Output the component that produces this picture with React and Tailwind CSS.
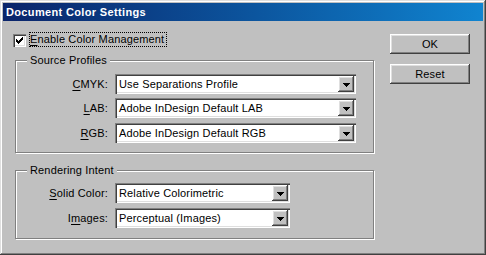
import React from "react";

const raisedBtn =
  "shadow-[inset_-1px_-1px_0_#404040,inset_1px_1px_0_#ffffff,inset_-2px_-2px_0_#808080,inset_2px_2px_0_#dfdfdf]";
const sunken =
  "shadow-[inset_1px_1px_0_#808080,inset_2px_2px_0_#404040,inset_-1px_-1px_0_#ffffff,inset_-2px_-2px_0_#dfdfdf]";

function Arrow() {
  return (
    <svg width="7" height="4" viewBox="0 0 7 4" shapeRendering="crispEdges">
      <path d="M0 0h7v1h-1v1h-1v1h-1v1h-1v-1h-1v-1h-1v-1h-1z" fill="#000" />
    </svg>
  );
}

function Select({ value, width }) {
  return (
    <div className={`flex h-[20px] bg-white p-[2px] ${sunken} ${width}`}>
      <div className="flex-1 pl-[2px] leading-[16px] whitespace-nowrap overflow-hidden">
        {value}
      </div>
      <div
        className={`flex h-[16px] w-[16px] items-center justify-center bg-[#c0c0c0] pt-[1px] ${raisedBtn}`}
      >
        <Arrow />
      </div>
    </div>
  );
}

function Row({ label, u, rest, value, width, className = "" }) {
  return (
    <div className={`flex h-[20px] items-center ${className}`}>
      <div className="w-[92px] text-right whitespace-nowrap">
        {label}
        <u className="underline-offset-[2px]">{u}</u>
        {rest}
      </div>
      <div className="ml-[7px]">
        <Select value={value} width={width} />
      </div>
    </div>
  );
}

function Group({ title, height, className = "", children }) {
  return (
    <div
      className={`ml-[2px] flex w-[359px] flex-col border border-[#808080] shadow-[1px_1px_0_#ffffff,inset_1px_1px_0_#ffffff] ${height} ${className}`}
    >
      <div className="-mt-[7px] ml-[11px] h-[13px] self-start bg-[#c0c0c0] px-[3px] leading-[13px]">
        {title}
      </div>
      {children}
    </div>
  );
}

function Check() {
  return (
    <div className={`h-[13px] w-[13px] bg-white p-[3px] ${sunken}`}>
      <svg width="7" height="7" viewBox="0 0 7 7" shapeRendering="crispEdges">
        <path
          d="M0 2h1v3h-1zM1 3h1v3h-1zM2 4h1v3h-1zM3 3h1v3h-1zM4 2h1v3h-1zM5 1h1v3h-1zM6 0h1v3h-1z"
          fill="#000"
        />
      </svg>
    </div>
  );
}

export default function App() {
  return (
    <div className="h-[255px] w-[486px] bg-[#c0c0c0] p-[3px] font-['Liberation_Sans',Arial,sans-serif] text-[11px] tracking-[0.15px] text-black shadow-[inset_-1px_-1px_0_#404040,inset_1px_1px_0_#dfdfdf,inset_-2px_-2px_0_#808080,inset_2px_2px_0_#ffffff]">
      <div className="flex h-[18px] items-center bg-gradient-to-r from-[#0a246a] to-[#1084d0] pl-[3px] text-[11px] font-bold tracking-[0.35px] text-white">
        Document Color Settings
      </div>
      <div className="flex pl-[10px] pt-[13px]">
        <div className="w-[362px]">
          <div className="flex h-[13px] items-start">
            <Check />
            <div className="-mt-[2px] ml-[3px] h-[15px] border border-dotted border-black pr-[2px] leading-[13px] whitespace-nowrap">
              <u className="underline-offset-[2px]">E</u>nable Color Management
            </div>
          </div>
          <Group title="Source Profiles" height="h-[93px]" className="mt-[13px]">
            <div className="mt-[7px]">
              <Row u="C" rest="MYK:" value="Use Separations Profile" width="w-[241px]" />
              <Row u="L" rest="AB:" value="Adobe InDesign Default LAB" width="w-[241px]" className="mt-[4px]" />
              <Row u="R" rest="GB:" value="Adobe InDesign Default RGB" width="w-[241px]" className="mt-[5px]" />
            </div>
          </Group>
          <Group title="Rendering Intent" height="h-[69px]" className="mt-[17px]">
            <div className="mt-[6px]">
              <Row u="S" rest="olid Color:" value="Relative Colorimetric" width="w-[175px]" />
              <Row label="I" u="m" rest="ages:" value="Perceptual (Images)" width="w-[175px]" className="mt-[5px]" />
            </div>
          </Group>
        </div>
        <div className="ml-[15px] flex flex-col gap-[10px]">
          <div className={`flex h-[20px] w-[80px] items-center justify-center ${raisedBtn}`}>OK</div>
          <div className={`flex h-[20px] w-[80px] items-center justify-center ${raisedBtn}`}>Reset</div>
        </div>
      </div>
    </div>
  );
}
